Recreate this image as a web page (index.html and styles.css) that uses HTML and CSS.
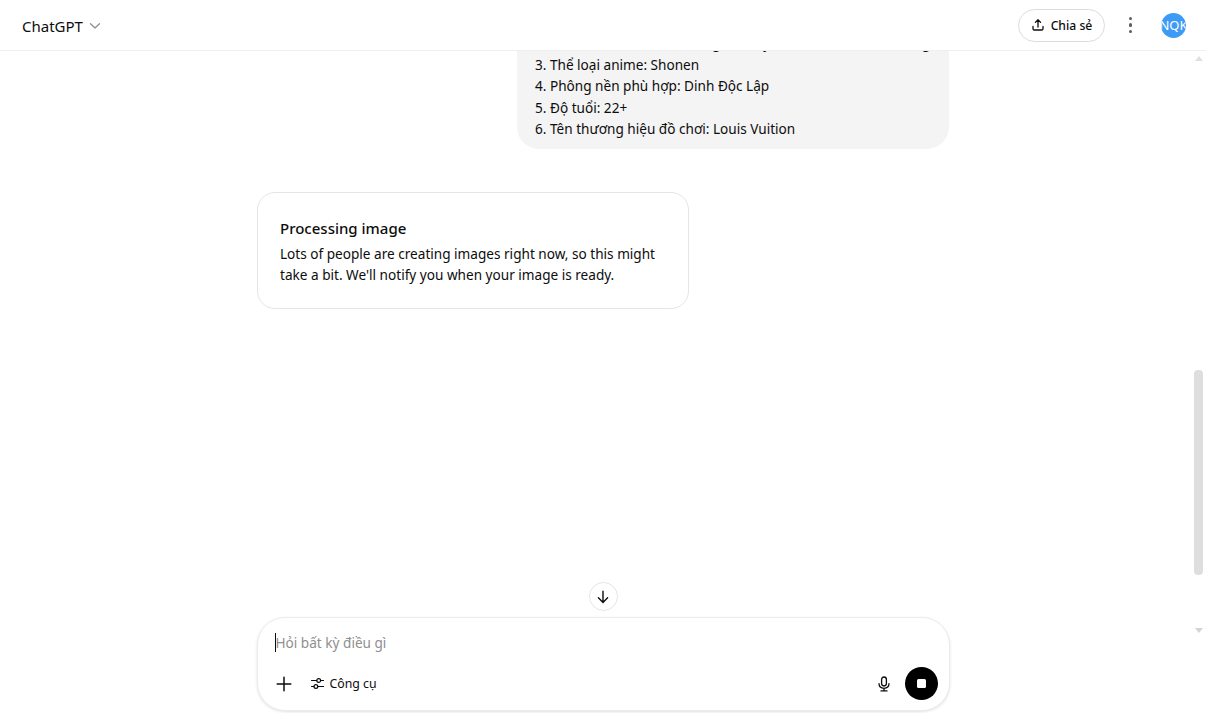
FILE: index.html
```html
<!DOCTYPE html>
<html lang="vi">
<head>
  <meta charset="UTF-8">
  <meta name="viewport" content="width=device-width, initial-scale=1.0">
  <title>ChatGPT</title>
  <link rel="stylesheet" href="styles.css">
</head>
<body>
  <header class="topbar">
    <div class="model-picker">
      <span class="model-name">ChatGPT</span>
      <svg class="chevron" width="12" height="12" viewBox="0 0 12 12"><path d="M1.5 3.8 6 8l4.5-4.2" fill="none" stroke="#8f8f8f" stroke-width="1.3" stroke-linecap="round" stroke-linejoin="round"/></svg>
    </div>
    <div class="topbar-actions">
      <button class="share-btn">
        <svg width="14" height="14" viewBox="0 0 14 14"><path d="M7 9V2M4.4 4.4 7 1.8l2.6 2.6M2 8.5v2.2c0 .8.6 1.3 1.3 1.3h7.4c.7 0 1.3-.5 1.3-1.3V8.5" fill="none" stroke="#0d0d0d" stroke-width="1.3" stroke-linecap="round" stroke-linejoin="round"/></svg>
        <span>Chia sẻ</span>
      </button>
      <div class="kebab"><i></i><i></i><i></i></div>
      <div class="avatar"><span>NQK</span></div>
    </div>
  </header>

  <main class="conversation">
    <div class="thread">
      <div class="user-bubble">
        <p>2. Tên nhân vật chính: Hoàng An Huy nam sinh tóc đỏ và dáng</p>
        <p>3. Thể loại anime: Shonen</p>
        <p>4. Phông nền phù hợp: Dinh Độc Lập</p>
        <p>5. Độ tuổi: 22+</p>
        <p>6. Tên thương hiệu đồ chơi: Louis Vuition</p>
      </div>
      <div class="status-card">
        <h3>Processing image</h3>
        <p>Lots of people are creating images right now, so this might take a bit. We'll notify you when your image is ready.</p>
      </div>
    </div>
    <button class="jump-btn">
      <svg width="16" height="16" viewBox="0 0 16 16"><path d="M8 2.2v11M3.4 8.8 8 13.4l4.6-4.6" fill="none" stroke="#0d0d0d" stroke-width="1.4" stroke-linecap="round" stroke-linejoin="round"/></svg>
    </button>
  </main>

  <div class="scrollbar">
    <span class="arrow-up"></span>
    <div class="track"><div class="thumb"></div></div>
    <span class="arrow-down"></span>
  </div>

  <footer class="composer-wrap">
    <div class="composer">
      <div class="prompt"><span class="caret"></span><span class="placeholder">Hỏi bất kỳ điều gì</span></div>
      <div class="composer-row">
        <div class="composer-left">
          <svg class="plus" width="16" height="16" viewBox="0 0 16 16"><path d="M8 1.2v13.6M1.2 8h13.6" fill="none" stroke="#0d0d0d" stroke-width="1.5" stroke-linecap="round"/></svg>
          <div class="tools">
            <svg width="15" height="15" viewBox="0 0 15 15"><g fill="none" stroke="#0d0d0d" stroke-width="1.2" stroke-linecap="round"><path d="M1.5 4.5h5.2M10.6 4.5h2.9M1.5 10.5h2.4M7.8 10.5h5.7"/><circle cx="8.7" cy="4.5" r="1.9"/><circle cx="5.9" cy="10.5" r="1.9"/></g></svg>
            <span>Công cụ</span>
          </div>
        </div>
        <div class="composer-right">
          <svg width="16" height="16" viewBox="0 0 16 16"><g fill="none" stroke="#0d0d0d" stroke-width="1.3" stroke-linecap="round"><rect x="5.6" y="1" width="4.8" height="9" rx="2.4"/><path d="M3 7.6c0 2.9 2.2 4.7 5 4.7s5-1.8 5-4.7M8 12.4v2.3M5 14.9h6"/></g></svg>
          <button class="stop-btn"><span></span></button>
        </div>
      </div>
    </div>
  </footer>
</body>
</html>
```

FILE: styles.css
```css
* {
  margin: 0;
  padding: 0;
  box-sizing: border-box;
}
html, body {
  height: 100%;
  overflow: hidden;
}
body {
  position: relative;
  display: flex;
  flex-direction: column;
  font-family: 'Noto Sans', 'Open Sans', sans-serif;
  font-size: 13.6px;
  color: #0d0d0d;
  background: #ffffff;
}
button {
  font: inherit;
  color: inherit;
  background: none;
}

/* top bar */
.topbar {
  flex: none;
  height: 51px;
  padding: 0 20px 0 22px;
  display: flex;
  justify-content: space-between;
  align-items: center;
  border-bottom: 1px solid #efefef;
  background: #ffffff;
}
.model-picker {
  display: flex;
  align-items: center;
  gap: 6px;
  padding-top: 1px;
}
.model-name {
  font-size: 15px;
}
.topbar-actions {
  display: flex;
  align-items: center;
}
.share-btn {
  width: 87px;
  height: 33px;
  display: flex;
  align-items: center;
  justify-content: center;
  gap: 6px;
  border: 1px solid #dcdcdc;
  border-radius: 17px;
  font-size: 12.2px;
  font-weight: 500;
}
.kebab {
  width: 4px;
  margin: 0 28.5px 0 23.5px;
  display: flex;
  flex-direction: column;
  gap: 3px;
}
.kebab i {
  width: 3.5px;
  height: 3.5px;
  border-radius: 50%;
  background: #5d5d5d;
}
.avatar {
  width: 25px;
  height: 25px;
  border-radius: 50%;
  background: #3d9bf5;
  color: #ffffff;
  font-size: 13px;
  overflow: hidden;
  display: flex;
  justify-content: center;
  align-items: center;
}

/* conversation */
.conversation {
  flex: 1;
  min-height: 0;
  position: relative;
  overflow: hidden;
}
.thread {
  width: 692px;
  margin: -28.1px auto 0;
  display: flex;
  flex-direction: column;
  align-items: flex-start;
}
.user-bubble {
  align-self: flex-end;
  width: 432px;
  padding: 9px 18px;
  background: #f4f4f4;
  border-radius: 22px;
  line-height: 21.6px;
  white-space: nowrap;
}
.status-card {
  width: 432px;
  margin-top: 42.7px;
  padding: 23px 22px 22px;
  border: 1px solid #e5e5e5;
  border-radius: 18px;
  line-height: 21.6px;
}
.status-card h3 {
  font-size: 15px;
  font-weight: 500;
  line-height: 24px;
  margin-bottom: 3px;
}
.jump-btn {
  position: absolute;
  left: 588.5px;
  bottom: 6px;
  width: 29px;
  height: 29px;
  border: 1px solid #e5e5e5;
  border-radius: 50%;
  background: #ffffff;
  display: flex;
  align-items: center;
  justify-content: center;
}

/* page scrollbar */
.scrollbar {
  position: absolute;
  top: 51px;
  right: 3px;
  bottom: 76px;
  width: 9px;
  display: flex;
  flex-direction: column;
  align-items: center;
}
.arrow-up, .arrow-down {
  flex: none;
  width: 0;
  height: 0;
  border-left: 4.5px solid transparent;
  border-right: 4.5px solid transparent;
}
.arrow-up {
  margin-top: 5px;
  border-bottom: 5px solid #e0e0e0;
}
.arrow-down {
  margin-bottom: 4px;
  border-top: 5px solid #d4d4d4;
}
.track {
  flex: 1;
  width: 100%;
  padding-top: 309px;
}
.thumb {
  height: 205px;
  border-radius: 4px;
  background: #dedede;
}

/* composer */
.composer-wrap {
  flex: none;
  height: 96px;
  display: flex;
  justify-content: center;
}
.composer {
  width: 693px;
  height: 94px;
  padding: 12px 11px 10px 17px;
  display: flex;
  flex-direction: column;
  justify-content: space-between;
  border: 1px solid #ececec;
  border-radius: 28px;
  box-shadow: 0 1px 3px rgba(0, 0, 0, 0.12);
  background: #ffffff;
}
.prompt {
  height: 24px;
  display: flex;
  align-items: center;
}
.caret {
  width: 1px;
  height: 19px;
  background: #0d0d0d;
}
.placeholder {
  color: #8f8f8f;
  font-size: 13.6px;
}
.composer-row {
  display: flex;
  justify-content: space-between;
  align-items: center;
}
.composer-left, .composer-right, .tools {
  display: flex;
  align-items: center;
}
.composer-left {
  gap: 18px;
  padding-left: 1px;
}
.tools {
  gap: 5px;
  font-size: 12.3px;
}
.composer-right {
  gap: 13px;
}
.stop-btn {
  width: 33px;
  height: 33px;
  border: none;
  border-radius: 50%;
  background: #000000;
  display: flex;
  align-items: center;
  justify-content: center;
}
.stop-btn span {
  width: 9px;
  height: 9px;
  border-radius: 1.5px;
  background: #ffffff;
}
```
